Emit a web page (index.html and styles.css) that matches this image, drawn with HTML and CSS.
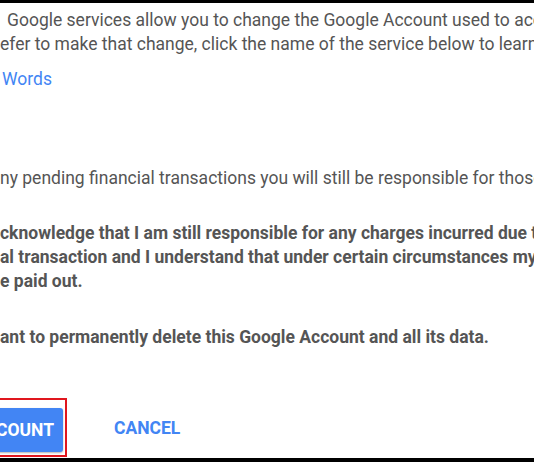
FILE: index.html
```html
<!DOCTYPE html>
<html lang="en">
<head>
<meta charset="utf-8">
<title>Delete Google Account</title>
<link rel="stylesheet" href="styles.css">
</head>
<body>
<div class="frame">
  <div class="content">
    <p class="intro">
      <span class="line l1">Google services allow you to change the Google Account used to access them. If you'd</span>
      <span class="line l2">efer to make that change, click the name of the service below to learn how.</span>
    </p>
    <a class="service-link" href="#">Words</a>
    <p class="notice"><span class="line">ny pending financial transactions you will still be responsible for those charges.</span></p>
    <p class="confirm">
      <span class="line">cknowledge that I am still responsible for any charges incurred due to any pending</span>
      <span class="line">al transaction and I understand that under certain circumstances my earnings won't</span>
      <span class="line">e paid out.</span>
    </p>
    <p class="confirm confirm-delete"><span class="line">ant to permanently delete this Google Account and all its data.</span></p>
    <div class="actions">
      <div class="delete-slot">
        <div class="highlight">
          <button class="btn-delete" type="button">DELETE ACCOUNT</button>
        </div>
      </div>
      <button class="btn-cancel" type="button">CANCEL</button>
    </div>
  </div>
</div>
</body>
</html>
```
FILE: styles.css
```css
html, body {
  margin: 0;
  padding: 0;
  background: #fff;
}
body {
  width: 534px;
  height: 462px;
  overflow: hidden;
  font-family: Roboto, "Noto Sans", Arial, sans-serif;
}
.frame {
  box-sizing: border-box;
  height: 462px;
  border-top: 3px solid #000;
  border-bottom: 4px solid #000;
  overflow: hidden;
}
.content {
  padding-top: 5px;
  display: flex;
  flex-direction: column;
  align-items: flex-start;
}
p {
  margin: 0;
  font-size: 17.5px;
  line-height: 24px;
  color: #555;
}
.line {
  display: block;
  white-space: nowrap;
}
.l1 {
  padding-left: 7px;
}
.service-link {
  margin-top: 11px;
  padding-left: 2px;
  font-size: 17.5px;
  line-height: 24px;
  color: #4285f4;
  text-decoration: none;
}
.notice {
  margin-top: 75px;
}
.confirm {
  margin-top: 31px;
  font-weight: 700;
}
.confirm-delete {
  margin-top: 32px;
}
.actions {
  margin-top: 49px;
  display: flex;
  align-items: center;
}
.delete-slot {
  width: 67px;
  display: flex;
  justify-content: flex-end;
}
.highlight {
  flex: none;
  border: 2px solid #e0161e;
  padding: 8px 2px 3px 0;
}
.btn-delete {
  display: block;
  height: 44px;
  padding: 0 9px 0 16px;
  border: 0;
  border-radius: 3px;
  background: #4285f4;
  color: #fff;
  font-family: Roboto, "Noto Sans", Arial, sans-serif;
  font-size: 17.5px;
  font-weight: 700;
  white-space: nowrap;
  box-shadow: 0 1px 2px rgba(0, 0, 0, 0.3);
}
.btn-cancel {
  margin-left: 39px;
  padding: 0 8px;
  border: 0;
  background: transparent;
  color: #4285f4;
  font-family: Roboto, "Noto Sans", Arial, sans-serif;
  font-size: 17.5px;
  font-weight: 700;
}
```
